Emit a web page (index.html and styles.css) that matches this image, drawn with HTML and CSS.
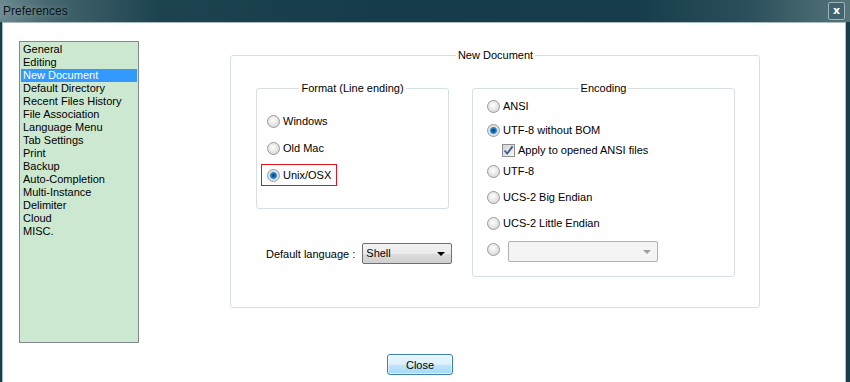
FILE: index.html
```html
<!DOCTYPE html>
<html lang="en">
<head>
  <meta charset="UTF-8">
  <title>Preferences</title>
  <link rel="stylesheet" href="styles.css">
</head>
<body>
  <div class="window">
    <div class="titlebar">
      <span class="title">Preferences</span>
      <button class="title-close">x</button>
    </div>

    <div class="content">
      <div class="panes">
        <ul class="pref-list">
          <li>General</li>
          <li>Editing</li>
          <li class="selected">New Document</li>
          <li>Default Directory</li>
          <li>Recent Files History</li>
          <li>File Association</li>
          <li>Language Menu</li>
          <li>Tab Settings</li>
          <li>Print</li>
          <li>Backup</li>
          <li>Auto-Completion</li>
          <li>Multi-Instance</li>
          <li>Delimiter</li>
          <li>Cloud</li>
          <li>MISC.</li>
        </ul>

        <!-- New Document page -->
        <fieldset class="group doc-group">
          <legend>New Document</legend>
          <div class="doc-cols">
            <div class="left-col">
              <fieldset class="group format-group">
                <legend>Format (Line ending)</legend>
                <label class="opt framed"><input type="radio" name="eol" class="radio">Windows</label>
                <label class="opt framed"><input type="radio" name="eol" class="radio">Old Mac</label>
                <label class="opt framed marked"><input type="radio" name="eol" class="radio" checked>Unix/OSX</label>
              </fieldset>

              <div class="lang-row">
                <span>Default language :</span>
                <div class="combo">Shell<span class="arrow"></span></div>
              </div>
            </div>

            <fieldset class="group enc-group">
              <legend>Encoding</legend>
              <label class="opt"><input type="radio" name="enc" class="radio">ANSI</label>
              <label class="opt bom"><input type="radio" name="enc" class="radio" checked>UTF-8 without BOM</label>
              <label class="opt sub">
                <span class="checkbox">
                  <svg width="11" height="11" viewBox="0 0 11 11"><path d="M1.5 5.5 L4.2 8.6 L9.6 1.4" fill="none" stroke="#3d5a98" stroke-width="1.8"/></svg>
                </span>
                Apply to opened ANSI files
              </label>
              <label class="opt after-sub"><input type="radio" name="enc" class="radio">UTF-8</label>
              <label class="opt"><input type="radio" name="enc" class="radio">UCS-2 Big Endian</label>
              <label class="opt"><input type="radio" name="enc" class="radio">UCS-2 Little Endian</label>
              <div class="opt other">
                <input type="radio" name="enc" class="radio">
                <div class="combo disabled"><span class="arrow"></span></div>
              </div>
            </fieldset>
          </div>
        </fieldset>
      </div>

      <div class="footer">
        <button class="close-btn">Close</button>
      </div>
    </div>
  </div>
</body>
</html>
```

FILE: styles.css
```css
body {
  margin: 0;
  font-family: 'Liberation Sans', Arial, sans-serif;
  font-size: 11px;
  color: #000;
  background: #1b3e4c;
  overflow: hidden;
}

.window {
  width: 850px;
  height: 382px;
  display: flex;
  flex-direction: column;
}

.titlebar {
  height: 22px;
  display: flex;
  align-items: center;
  justify-content: space-between;
  padding-left: 3px;
  background: linear-gradient(90deg, #6b8a8f 0, #45666e 50px, #1d4250 160px, #163b4a 45%, #173c4b 75%, #2b4f5c 88%, #557579 100%);
}

.title {
  font-size: 12px;
  color: #0a1418;
  text-shadow: 0 0 6px rgba(255, 255, 255, 0.35);
}

.title-close {
  width: 17px;
  height: 18px;
  margin-right: 5px;
  padding: 0;
  border: 1px solid #9fb3b8;
  border-radius: 2px;
  background: #3f6470;
  color: #fff;
  font-family: 'DejaVu Sans', sans-serif;
  font-size: 11px;
  font-weight: bold;
  line-height: 14px;
}

.content {
  flex: 1;
  margin: 0 4px 0 2px;
  border: 1px solid #a9bcc0;
  border-bottom: none;
  background: #fff;
  padding: 18px 0 0 16px;
}

.panes {
  display: flex;
  align-items: flex-start;
}

/* category list */
.pref-list {
  list-style: none;
  margin: 0;
  padding: 1px 1px 0 1px;
  width: 116px;
  height: 299px;
  border: 1px solid #828790;
  background: #cde8d0;
}

.pref-list li {
  height: 13px;
  line-height: 13px;
  padding-left: 2px;
  white-space: nowrap;
}

.pref-list li.selected {
  background: #3399ff;
  color: #fff;
}

/* group boxes */
.group {
  margin: 0;
  border: 1px solid #d5dfe5;
  border-radius: 3px;
  min-inline-size: 0;
}

.group legend {
  margin-left: auto;
  margin-right: auto;
  padding: 0 2px;
  line-height: 13px;
}

.doc-group {
  margin: 8px 0 0 91px;
  padding: 20px 24px 30px 25px;
}

.doc-cols {
  display: flex;
  align-items: flex-start;
  gap: 23px;
}

.left-col {
  width: 193px;
}

.format-group {
  width: 183px;
  padding: 15px 4px 22px 4px;
}

.enc-group {
  width: 233px;
  padding: 1px 14px 17px 14px;
}

/* option rows */
.opt {
  display: flex;
  align-items: center;
  gap: 3px;
  height: 20px;
  white-space: nowrap;
}

.opt.framed {
  width: fit-content;
  padding: 0 6px 0 5px;
  border: 1px solid transparent;
  margin-top: 5px;
}

.opt.framed:first-of-type {
  margin-top: 0;
}

.opt.marked {
  border-color: #e4141b;
  padding-right: 5px;
}

.enc-group .opt {
  margin-top: 6px;
}

.enc-group .opt:first-of-type {
  margin-top: 0;
}

.enc-group .opt.bom {
  margin-top: 4px;
}

.enc-group .opt.sub {
  margin-top: 0;
  padding-left: 15px;
}

.enc-group .opt.after-sub {
  margin-top: 1px;
}

.enc-group .opt.other {
  gap: 8px;
  margin-top: 6px;
  align-items: flex-start;
}

.radio {
  appearance: none;
  -webkit-appearance: none;
  width: 13px;
  height: 13px;
  margin: 0;
  border: 1px solid #9a9a9a;
  border-radius: 50%;
  background: radial-gradient(circle at 45% 40%, #ffffff 0, #e9e9e9 45%, #cfcfcf 100%);
  box-sizing: border-box;
}

.opt.other .radio {
  margin-top: 4px;
}

.radio:checked {
  background: radial-gradient(circle at 50% 50%, #0b3f6e 0, #125d9c 1.5px, #2f8fd8 3px, #8fc3ea 3.6px, #e6e6e6 4.2px, #d2d2d2 100%);
}

.checkbox {
  width: 11px;
  height: 11px;
  border: 1px solid #8e8f8f;
  background: linear-gradient(135deg, #d4d4d4, #f7f7f7);
  display: flex;
  align-items: center;
  justify-content: center;
}

/* combo boxes */
.lang-row {
  display: flex;
  align-items: center;
  gap: 7px;
  margin-top: 34px;
  padding-left: 10px;
  white-space: nowrap;
}

.combo {
  position: relative;
  flex-shrink: 0;
  box-sizing: border-box;
  width: 90px;
  height: 21px;
  line-height: 19px;
  padding-left: 3px;
  border: 1px solid #707070;
  border-radius: 2px;
  background: linear-gradient(#f2f2f2, #ebebeb 50%, #dddddd 51%, #cfcfcf);
}

.combo .arrow {
  position: absolute;
  right: 6px;
  top: 8px;
  border-left: 4px solid transparent;
  border-right: 4px solid transparent;
  border-top: 4px solid #000;
}

.combo.disabled {
  width: 150px;
  margin-top: 2px;
  border-color: #adb2b5;
  background: #f4f4f4;
}

.combo.disabled .arrow {
  border-top-color: #a0a0a0;
}

.footer {
  display: flex;
  justify-content: center;
  margin-top: 11px;
  padding-right: 24px;
}

.close-btn {
  width: 66px;
  height: 21px;
  padding: 0;
  border: 1px solid #3c7fb1;
  border-radius: 3px;
  background: linear-gradient(#eaf6fd, #d9f0fc 50%, #bee6fd 51%, #a7d9f5);
  box-shadow: inset 0 0 0 1px rgba(255, 255, 255, 0.6);
  font-family: 'Liberation Sans', Arial, sans-serif;
  font-size: 11px;
  color: #000;
}
```
